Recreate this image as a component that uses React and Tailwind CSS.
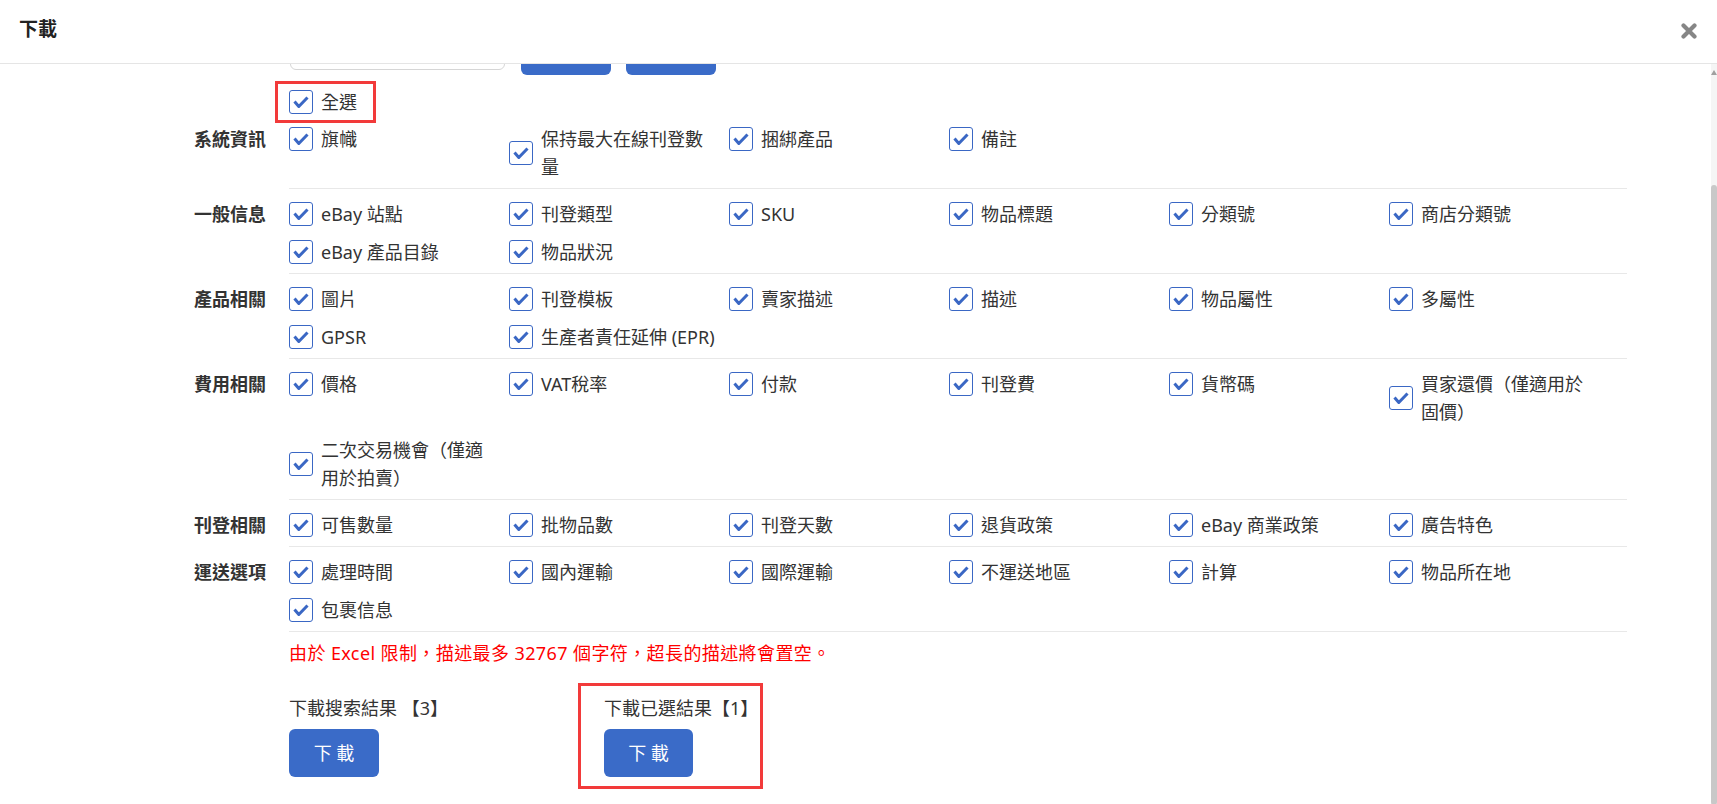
import React from 'react';

const GROUPS = [
  { title: '系統資訊', items: ['旗幟', '保持最大在線刊登數量', '捆綁產品', '備註'] },
  {
    title: '一般信息',
    items: ['eBay 站點', '刊登類型', 'SKU', '物品標題', '分類號', '商店分類號', 'eBay 產品目錄', '物品狀況'],
  },
  {
    title: '產品相關',
    items: ['圖片', '刊登模板', '賣家描述', '描述', '物品屬性', '多屬性', 'GPSR', '生產者責任延伸 (EPR)'],
  },
  {
    title: '費用相關',
    items: ['價格', 'VAT稅率', '付款', '刊登費', '貨幣碼', '買家還價（僅適用於固價）', '二次交易機會（僅適用於拍賣）'],
  },
  { title: '刊登相關', items: ['可售數量', '批物品數', '刊登天數', '退貨政策', 'eBay 商業政策', '廣告特色'] },
  {
    title: '運送選項',
    items: ['處理時間', '國內運輸', '國際運輸', '不運送地區', '計算', '物品所在地', '包裹信息'],
  },
];

function CheckBox() {
  return (
    <span className="w-[24px] h-[24px] shrink-0 rounded-[3px] border-[1.5px] border-[#3a67c4] bg-white flex items-center justify-center">
      <svg width="22" height="22" viewBox="0 0 22 22">
        <path d="M4.5 10.5 L8.8 15.5 L17.5 6.5" fill="none" stroke="#3a67c4" strokeWidth="3" strokeLinejoin="round" />
      </svg>
    </span>
  );
}

function CheckItem({ label }) {
  return (
    <div className="w-[220px] py-[5px] pr-[10px] flex items-center">
      <CheckBox />
      <span className="ml-2 leading-[28px] text-[18px] text-[#333]">{label}</span>
    </div>
  );
}

export default function App() {
  return (
    <div
      className="relative w-[1717px] h-[804px] bg-white overflow-hidden"
      style={{ fontFamily: '"Noto Sans", "Noto Sans CJK TC", sans-serif' }}
    >
      {/* header */}
      <div className="h-[64px] border-b border-[#e5e5e5] flex items-center justify-between pl-[19px] pr-[20px] pb-[4px]">
        <h1 className="text-[19px] font-bold text-[#222]">下載</h1>
        <svg width="16" height="16" viewBox="0 0 16 16" className="mt-[2px]">
          <path d="M2.5 2.5 L13.5 13.5 M13.5 2.5 L2.5 13.5" stroke="#868686" strokeWidth="4.2" strokeLinecap="round" />
        </svg>
      </div>

      <div className="relative h-[740px] overflow-hidden">
        {/* partially scrolled search row */}
        <div className="pl-[290px] h-[40px] -mt-[29px] flex items-end">
          <div className="w-[215px] h-[36px] mb-[5px] rounded-[6px] border border-[#d6d6d6]" />
          <div className="ml-[16px] w-[90px] h-[40px] rounded-[6px] bg-[#3a6bc8]" />
          <div className="ml-[15px] w-[90px] h-[40px] rounded-[6px] bg-[#3a6bc8]" />
        </div>

        {/* select all */}
        <div className="pl-[289px] h-[39px] pt-[13px]">
          <div className="relative inline-flex items-center">
            <CheckBox />
            <span className="ml-2 leading-[28px] text-[18px] text-[#333]">全選</span>
            <div className="absolute left-[-14px] top-[-7px] w-[101px] h-[42px] border-[3px] border-[#f23a3a]" />
          </div>
        </div>

        {GROUPS.map((g) => (
          <div key={g.title} className="flex">
            <div className="w-[289px] pr-[23px] pt-[10px] text-right text-[18px] leading-[30px] font-bold text-[#333]">
              {g.title}
            </div>
            <div className="w-[1338px] flex flex-wrap items-start border-b border-[#e8e8e8] pt-[6px] pb-[2px]">
              {g.items.map((it) => (
                <CheckItem key={it} label={it} />
              ))}
            </div>
          </div>
        ))}

        <div className="pl-[289px]">
          <p className="mt-[6px] text-[18px] leading-[30px] tracking-[0.4px] text-[#ff0000]">
            由於 Excel 限制，描述最多 32767 個字符，超長的描述將會置空。
          </p>
          <div className="flex mt-[25px]">
            <div className="w-[315px]">
              <p className="text-[18px] leading-[30px] text-[#333]">下載搜索結果 【3】</p>
              <button className="mt-[6px] w-[90px] h-[48px] rounded-[6px] bg-[#3a6bc8] text-white text-[18px]">
                下 載
              </button>
            </div>
            <div className="relative">
              <p className="text-[18px] leading-[30px] text-[#333]">下載已選結果【1】</p>
              <button className="mt-[6px] w-[89px] h-[48px] rounded-[6px] bg-[#3a6bc8] text-white text-[18px]">
                下 載
              </button>
              <div className="absolute left-[-26px] top-[-10px] w-[185px] h-[106px] border-[3px] border-[#f23a3a]" />
            </div>
          </div>
        </div>

        {/* scrollbar */}
        <div className="absolute right-0 top-0 w-[6px] h-full bg-[#f5f5f5]">
          <div className="mx-auto mt-[6px] w-0 h-0 border-l-[3px] border-r-[3px] border-b-[5px] border-l-transparent border-r-transparent border-b-[#a0a0a0]" />
          <div className="mt-[110px] w-[6px] h-[620px] rounded-[3px] bg-[#c8c8c8]" />
        </div>
      </div>
    </div>
  );
}
